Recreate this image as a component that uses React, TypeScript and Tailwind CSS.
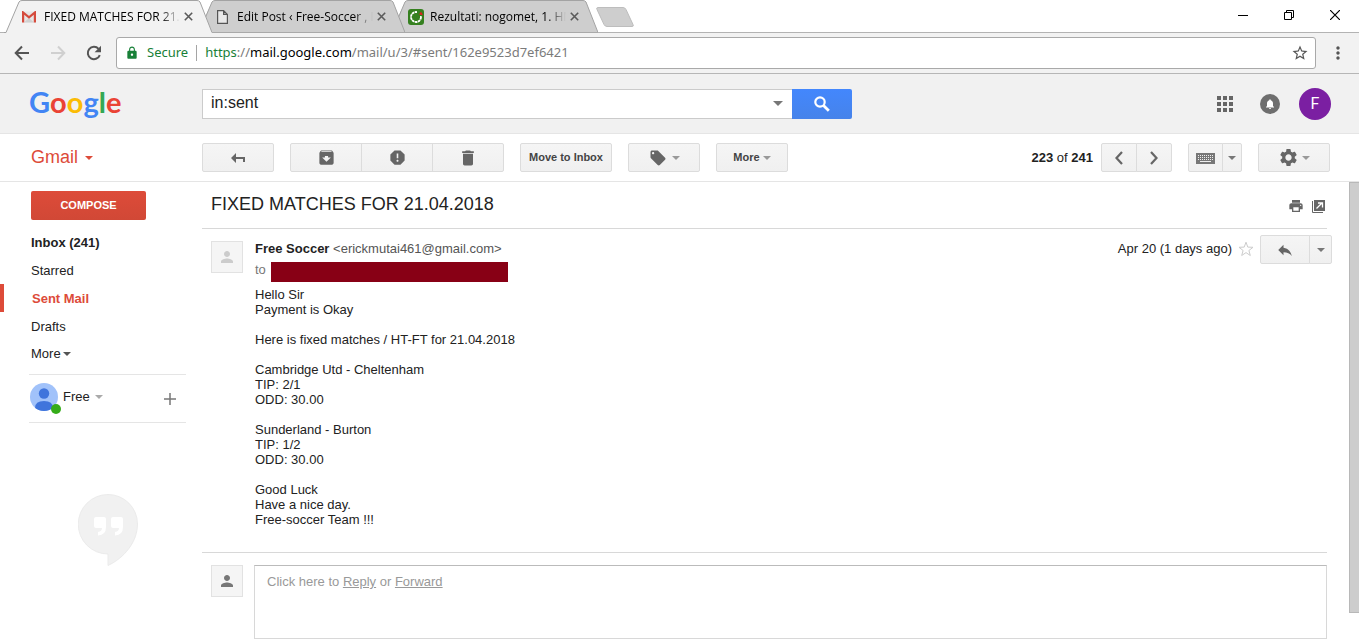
import React from "react";
import {
  MdApps,
  MdArchive,
  MdDelete,
  MdLocalOffer,
  MdLock,
  MdMoreVert,
  MdNotifications,
  MdPerson,
  MdPrint,
  MdReply,
  MdReport,
  MdSettings,
  MdStarBorder,
} from "react-icons/md";

function Caret({ className = "text-[#777]" }: { className?: string }) {
  return (
    <svg viewBox="0 0 8 4" className={`h-1 w-2 shrink-0 ${className}`} aria-hidden="true">
      <path d="M0 0h8L4 4z" fill="currentColor" />
    </svg>
  );
}

function CloseIcon() {
  return (
    <svg viewBox="0 0 9 9" className="size-[9px]" aria-hidden="true">
      <path d="M.8.8l7.4 7.4M8.2.8L.8 8.2" stroke="#5a5a5a" strokeWidth="1.6" />
    </svg>
  );
}

function GmailIcon() {
  return (
    <svg viewBox="0 0 14 12" className="h-3 w-[14px]" aria-hidden="true">
      <rect x="1" y=".5" width="12" height="11" fill="#e6e6e6" />
      <path d="M2 11.500L7 7l5 4.500z" fill="#d0d0d0" />
      <path d="M1.100 11.500V1.500L7 6.300l5.900-4.800v10" fill="none" stroke="#d54b3d" strokeWidth="2.200" />
    </svg>
  );
}

function PageIcon() {
  return (
    <svg viewBox="0 0 11 14" className="ml-[2px] h-[14px] w-[11px]" aria-hidden="true">
      <path d="M.6.6h6l3.800 3.800v9H.6zM6.600.6v3.800h3.800" fill="#e8e8e8" stroke="#555" strokeWidth="1.200" />
    </svg>
  );
}

function RezultatiIcon() {
  return (
    <svg viewBox="0 0 16 16" className="size-4" aria-hidden="true">
      <rect width="16" height="16" rx="3" fill="#35801f" />
      <circle cx="8" cy="8" r="5" fill="none" stroke="#fff" strokeWidth="1.800" strokeDasharray="2.600 .5" />
      <path d="M9 1.500h5.500V7H9z" fill="#35801f" />
      <path d="M11 5.500L13 2.500l2 3.800z" fill="#e02020" />
    </svg>
  );
}

type TabProps = { title: string; icon: React.ReactNode; active?: boolean; order: string };

function BrowserTab({ title, icon, active, order }: TabProps) {
  return (
    <div className={`relative -ml-[15px] flex h-[33px] w-52 items-center pr-[19px] pl-[18px] first:ml-0 ${order}`}>
      <svg viewBox="0 0 208 33" preserveAspectRatio="none" className="absolute inset-0 size-full" aria-hidden="true">
        <path
          d={active ? "M0 33V32.500h2L15 2Q16 .5 18 .5H193Q195 .5 196 2L208 32.500V33z" : "M1 32.500L15 2Q16 .5 18 .5H193Q195 .5 196 2L208 32.500z"}
          fill={active ? "#f2f2f2" : "#cecece"}
        />
        <path
          d="M0 32.500h2L15 2Q16 .5 18 .5H193Q195 .5 196 2L208 32.500"
          fill="none"
          stroke="#a3a3a3"
        />
        {!active && <path d="M0 32.500H208" stroke="#a9a9a9" />}
      </svg>
      <span className="relative flex w-[22px] shrink-0 items-center">{icon}</span>
      <span className="relative min-w-0 flex-1 overflow-hidden text-[12px] leading-4 whitespace-nowrap text-black [mask-image:linear-gradient(to_right,black_86%,transparent)]">
        {title}
      </span>
      <button aria-label={`Close ${title}`} className="relative ml-1">
        <CloseIcon />
      </button>
    </div>
  );
}

function BrowserChrome() {
  return (
    <div className="font-['Open_Sans','Noto_Sans',sans-serif]">
      <div className="flex h-[33px] bg-white shadow-[inset_0_-1px_0_#b3b3b3]">
        <div className="flex pl-1">
          <BrowserTab active order="z-30" icon={<GmailIcon />} title="FIXED MATCHES FOR 21.0" />
          <BrowserTab order="z-20" icon={<PageIcon />} title="Edit Post ‹ Free-Soccer , F" />
          <BrowserTab order="z-10" icon={<RezultatiIcon />} title="Rezultati: nogomet, 1. HN" />
        </div>
        <button aria-label="New tab" className="-ml-[3px] h-[22px] w-10 self-start pt-[7px]">
          <svg viewBox="0 0 40 22" className="h-[22px] w-10" aria-hidden="true">
            <path d="M3 .5h25q2 0 3 2l7 15q1 2-1 2H12q-2 0-3-2L2 2.500q-1-2 1-2z" fill="#cecece" stroke="#bdbdbd" />
          </svg>
        </button>
        <div className="ml-auto flex items-center gap-9 pr-[19px] pb-1">
          <button aria-label="Minimize">
            <svg viewBox="0 0 10 10" className="size-[10px]"><path d="M0 5.500h10" stroke="#000" /></svg>
          </button>
          <button aria-label="Restore">
            <svg viewBox="0 0 10 10" className="size-[10px]" fill="none" stroke="#000">
              <path d="M.5 2.500h7v7h-7zM2.500 2.500v-2h7v7h-2" />
            </svg>
          </button>
          <button aria-label="Close window">
            <svg viewBox="0 0 10 10" className="size-[10px]"><path d="M0 0l10 10M10 0L0 10" stroke="#000" strokeWidth="1.200" /></svg>
          </button>
        </div>
      </div>
      <div className="flex items-center border-b border-[#b6b6b6] bg-[#f2f2f2] py-1 pr-[11px] pl-[14px]">
        <div className="flex w-[102px] shrink-0 items-center gap-5">
          <button aria-label="Back">
            <svg viewBox="0 0 16 16" className="size-4" fill="none" stroke="#555" strokeWidth="2">
              <path d="M15 8H2M8 1.500L1.700 8 8 14.500" />
            </svg>
          </button>
          <button aria-label="Forward">
            <svg viewBox="0 0 16 16" className="size-4" fill="none" stroke="#d0d0d0" strokeWidth="2">
              <path d="M1 8h13M8 1.500L14.300 8 8 14.500" />
            </svg>
          </button>
          <button aria-label="Reload">
            <svg viewBox="0 0 16 16" className="size-4" aria-hidden="true">
              <path d="M13.800 10.200A6.200 6.200 0 1 1 12.600 3.800" fill="none" stroke="#555" strokeWidth="2" />
              <path d="M15 .8v6.400H8.600z" fill="#555" />
            </svg>
          </button>
        </div>
        <div className="flex h-8 min-w-0 flex-1 items-center rounded-[3px] border border-[#a9a9a9] bg-white pr-[6px] pl-2 font-['Noto_Sans','Open_Sans',sans-serif] text-[13px]">
          <MdLock className="size-[14px] shrink-0 text-[#188038]" />
          <span className="ml-2 text-[#188038]">Secure</span>
          <span className="mx-2 h-4 w-px bg-[#a5a5a5]" />
          <div className="min-w-0 flex-1 truncate text-[#7b7b7b]">
            <span className="text-[#188038]">https</span>://<span className="text-black">mail.google.com</span>/mail/u/3/#sent/162e9523d7ef6421
          </div>
          <button aria-label="Bookmark this page"><MdStarBorder className="size-[18px] text-[#555]" /></button>
        </div>
        <button aria-label="Browser menu" className="ml-3"><MdMoreVert className="size-5 text-[#555]" /></button>
      </div>
    </div>
  );
}

const toolButton =
  "flex h-[29px] items-center justify-center border border-[#dcdcdc] bg-linear-to-b from-[#f5f5f5] to-[#f0f0f0] text-[11px] font-bold text-[#444]";

function Header() {
  return (
    <header className="flex h-[60px] items-center border-b border-[#e5e5e5] bg-[#f1f1f1] pr-7 pl-[29px]">
      <a href="#google" aria-label="Google" className="flex w-[173px] shrink-0 items-center pb-1 font-['Lato',sans-serif] text-[29px] leading-[30px] font-bold">
        <span className="text-[#4285f4]">G</span>
        <span className="text-[#ea4335]">o</span>
        <span className="text-[#fbbc05]">o</span>
        <span className="text-[#4285f4]">g</span>
        <span className="text-[#34a853]">l</span>
        <span className="text-[#ea4335]">e</span>
      </a>
      <form className="flex h-[30px] w-[650px]" onSubmit={(e) => e.preventDefault()}>
        <div className="flex min-w-0 flex-1 items-center border border-r-0 border-[#cbcbcb] bg-white pr-[9px]">
          <input aria-label="Search mail" defaultValue="in:sent" className="h-full min-w-0 flex-1 px-2 pb-[2px] text-[16px] text-[#222] outline-none" />
          <button type="button" aria-label="Search options">
            <svg viewBox="0 0 10 5" className="h-[5px] w-[10px] text-[#777]"><path d="M0 0h10L5 5z" fill="currentColor" /></svg>
          </button>
        </div>
        <button aria-label="Search" className="flex w-[60px] items-center justify-center rounded-r-[2px] bg-linear-to-b from-[#4387fd] to-[#4683ea]">
          <svg viewBox="0 0 16 16" className="size-4" fill="none" stroke="#fff" aria-hidden="true">
            <circle cx="6" cy="6" r="4.700" strokeWidth="2.200" />
            <path d="M9.500 9.500l5.300 5.300" strokeWidth="2.800" />
          </svg>
        </button>
      </form>
      <div className="ml-auto flex items-center">
        <button aria-label="Apps"><MdApps className="size-6 text-[#666]" /></button>
        <button aria-label="Notifications" className="ml-[23px] flex size-5 items-center justify-center rounded-full bg-[#6e6e6e]">
          <MdNotifications className="size-3 text-white" />
        </button>
        <button aria-label="Account" className="ml-[19px] flex size-8 items-center justify-center rounded-full bg-[#7b1fa2] font-['Roboto',sans-serif] text-[16px] text-white">
          F
        </button>
      </div>
    </header>
  );
}

function Toolbar() {
  return (
    <div className="flex items-center border-b border-[#e5e5e5] py-[9px] pr-[29px] pl-[31px]">
      <button className="flex w-[171px] shrink-0 items-center gap-[7px] text-[18px] leading-[21px] text-[#dd4b39]">
        Gmail <Caret className="text-[#dd4b39]" />
      </button>
      <div className="flex gap-4">
        <button aria-label="Back to Sent Mail" className={`${toolButton} w-[72px] rounded-[2px]`}>
          <svg viewBox="0 0 14 10" className="h-[10px] w-[14px]"><path d="M0 5l5-5v4h9v5h-2V6H5v4z" fill="#666" /></svg>
        </button>
        <div className="flex">
          <button aria-label="Archive" className={`${toolButton} w-[72px] rounded-l-[2px]`}><MdArchive className="size-[19px] text-[#666]" /></button>
          <button aria-label="Report spam" className={`${toolButton} -ml-px w-[72px]`}><MdReport className="size-[19px] text-[#666]" /></button>
          <button aria-label="Delete" className={`${toolButton} -ml-px w-[72px] rounded-r-[2px]`}><MdDelete className="size-5 text-[#666]" /></button>
        </div>
        <button className={`${toolButton} w-[92px] rounded-[2px]`}>Move to Inbox</button>
        <button aria-label="Labels" className={`${toolButton} w-[72px] gap-[5px] rounded-[2px]`}>
          <MdLocalOffer className="size-[18px] text-[#666]" /><Caret className="text-[#999]" />
        </button>
        <button className={`${toolButton} w-[72px] gap-[3px] rounded-[2px]`}>More <Caret className="text-[#999]" /></button>
      </div>
      <div className="ml-auto flex items-center">
        <span className="mr-2 text-[13px] leading-5 text-[#222]"><b>223</b> of <b>241</b></span>
        <div className="flex">
          <button aria-label="Newer" className={`${toolButton} w-9 rounded-l-[2px]`}>
            <svg viewBox="0 0 8 14" className="h-[14px] w-2" fill="none" stroke="#666" strokeWidth="2.200"><path d="M7 1L1.500 7 7 13" /></svg>
          </button>
          <button aria-label="Older" className={`${toolButton} -ml-px w-9 rounded-r-[2px]`}>
            <svg viewBox="0 0 8 14" className="h-[14px] w-2" fill="none" stroke="#666" strokeWidth="2.200"><path d="M1 1l5.500 6L1 13" /></svg>
          </button>
        </div>
        <div className="ml-4 flex">
          <button aria-label="Input tools" className={`${toolButton} w-[35px] rounded-l-[2px] pt-[2px]`}>
            <svg viewBox="0 0 19 11" className="h-[11px] w-[19px]">
              <rect width="19" height="11" fill="#777" />
              <path d="M2 2.500h15M2 4.500h15M2 6.500h15" stroke="#eee" strokeDasharray="1 1" />
              <path d="M4 8.500h11" stroke="#eee" />
            </svg>
          </button>
          <button aria-label="Select input tool" className={`${toolButton} -ml-px w-5 rounded-r-[2px]`}><Caret /></button>
        </div>
        <button aria-label="Settings" className={`${toolButton} ml-4 w-[72px] gap-[3px] rounded-[2px]`}>
          <MdSettings className="size-[21px] text-[#666]" /><Caret className="text-[#999]" />
        </button>
      </div>
    </div>
  );
}

function Sidebar() {
  return (
    <aside className="w-[202px] shrink-0 pt-[9px] text-[13px] leading-[28px] text-[#222]">
      <button className="ml-[31px] block h-[29px] w-[115px] rounded-[2px] bg-linear-to-b from-[#dd4b39] to-[#d14836] pb-[2px] text-[11px] leading-[26px] font-bold text-white">
        COMPOSE
      </button>
      <nav className="mt-2 flex flex-col leading-[30px]">
        <a href="#inbox" className="h-7 pl-[31px] font-bold">Inbox (241)</a>
        <a href="#starred" className="h-7 pl-[31px]">Starred</a>
        <a href="#sent" className="h-7 border-l-4 border-[#dd4b39] pl-7 font-bold text-[#dd4b39]">Sent Mail</a>
        <a href="#drafts" className="h-7 pl-[31px]">Drafts</a>
        <button className="flex items-center gap-[2px] pl-[31px] leading-[27px]">More <Caret className="text-[#555]" /></button>
      </nav>
      <div className="mt-[7px] mr-4 ml-[29px] flex h-[49px] items-center border-y border-[#e5e5e5] pr-[10px] pl-px">
        <div className="relative mb-[3px]">
          <svg viewBox="0 0 28 28" className="size-7" aria-hidden="true">
            <defs><clipPath id="chatAvatar"><circle cx="14" cy="14" r="14" /></clipPath></defs>
            <g clipPath="url(#chatAvatar)">
              <rect width="28" height="28" fill="#a1c2fa" />
              <circle cx="14" cy="10.500" r="5.200" fill="#3f74dc" />
              <path d="M5 25q0-7 9-7t9 7v3H5z" fill="#3f74dc" />
            </g>
          </svg>
          <span className="absolute -right-[3px] -bottom-[3px] size-[10px] rounded-full bg-[#35ac19]" />
        </div>
        <button className="mb-[3px] ml-[5px] flex items-center gap-[5px]">Free <Caret className="text-[#aaa]" /></button>
        <button aria-label="New conversation" className="ml-auto">
          <svg viewBox="0 0 12 12" className="size-3"><path d="M6 0v12M0 6h12" stroke="#777" strokeWidth="1.500" /></svg>
        </button>
      </div>
      <svg viewBox="0 0 60 72" className="mt-[71px] ml-[78px] h-[72px] w-[60px]" aria-hidden="true">
        <path d="M30 .5a29.500 29.500 0 1 0 0 59.500v11.500C46 64 59.500 48 59.500 30A29.500 29.500 0 0 0 30 .5z" fill="#f1f1f1" stroke="#ebebeb" />
        <path d="M18 23h8q2 0 2 2v8q0 8-8 8.500v-3.500q4-.5 4-4h-6q-2 0-2-2v-7q0-2 2-2zM35 23h8q2 0 2 2v8q0 8-8 8.500v-3.500q4-.5 4-4h-6q-2 0-2-2v-7q0-2 2-2z" fill="#fff" />
      </svg>
    </aside>
  );
}

const body = [
  ["Hello Sir", "Payment is Okay"],
  ["Here is fixed matches / HT-FT for 21.04.2018"],
  ["Cambridge Utd - Cheltenham", "TIP: 2/1", "ODD: 30.00"],
  ["Sunderland - Burton", "TIP: 1/2", "ODD: 30.00"],
  ["Good Luck", "Have a nice day.", "Free-soccer Team !!!"],
];

function Avatar({ className }: { className: string }) {
  return (
    <div className="flex size-8 shrink-0 items-center justify-center border border-[#e2e2e2] bg-[#f5f5f5]">
      <MdPerson className={`size-[18px] ${className}`} />
    </div>
  );
}

function Message() {
  return (
    <main className="min-w-0 flex-1 pr-[22px] text-[13px] leading-[15px] text-[#222]">
      <div className="flex h-[47px] items-center border-b border-[#d8d8d8] pr-[2px] pl-[9px]">
        <h1 className="pb-[2px] text-[18px] leading-6">FIXED MATCHES FOR 21.04.2018</h1>
        <div className="ml-auto flex items-center gap-2 pt-[2px]">
          <button aria-label="Print"><MdPrint className="size-4 text-[#666]" /></button>
          <button aria-label="In new window">
            <svg viewBox="0 0 13 13" className="size-[13px]">
              <path d="M2 0h11v11H2z" fill="#666" />
              <path d="M.5 1v11.500H11" fill="none" stroke="#666" />
              <path d="M4.500 8.500l5-5M6 3h4.500v4.500" fill="none" stroke="#fff" strokeWidth="1.300" />
            </svg>
          </button>
        </div>
      </div>
      <article className="-mr-[5px] flex gap-3 pt-[6px] pb-[25px] pl-[9px]">
        <div className="pt-[6px]"><Avatar className="text-[#ccc]" /></div>
        <div className="min-w-0 flex-1">
          <div className="flex h-[27px] items-center">
            <span><b>Free Soccer</b> <span className="text-[#555]">&lt;erickmutai461@gmail.com&gt;</span></span>
            <span className="ml-auto">Apr 20 (1 days ago)</span>
            <button aria-label="Star" className="mx-[6px]">
              <svg viewBox="0 0 16 16" className="size-4">
                <path d="M8 1.200l1.800 4.900 5.200.2-4.100 3.200 1.400 5L8 11.600l-4.300 2.900 1.400-5L1 6.300l5.200-.2z" fill="#fff" stroke="#ccc" />
              </svg>
            </button>
            <div className="flex self-start">
              <button aria-label="Reply" className={`${toolButton} w-[50px] rounded-l-[2px]`}><MdReply className="size-[18px] text-[#666]" /></button>
              <button aria-label="More reply options" className={`${toolButton} -ml-px w-[23px] rounded-r-[2px]`}><Caret /></button>
            </div>
          </div>
          <div className="flex h-5 items-center text-[#777]">
            <span className="w-4 pb-[6px]">to</span>
            <span className="h-5 w-[237px] bg-[#880015]" />
          </div>
          <div className="mt-[5px] space-y-[15px]">
            {body.map((lines) => (
              <div key={lines.join()}>
                {lines.map((line) => <p key={line}>{line}</p>)}
              </div>
            ))}
          </div>
        </div>
      </article>
      <section className="flex gap-[11px] border-t border-[#d8d8d8] pt-3 pl-[9px]">
        <Avatar className="text-[#777]" />
        <div className="h-[74px] flex-1 border border-[#d8d8d8] border-t-[#bbb] px-3 pt-2 text-[#999]">
          Click here to <a href="#reply" className="underline">Reply</a> or <a href="#forward" className="underline">Forward</a>
        </div>
      </section>
    </main>
  );
}

export default function App() {
  return (
    <div className="flex min-h-screen flex-col bg-white font-['Liberation_Sans',Arial,sans-serif]">
      <BrowserChrome />
      <Header />
      <Toolbar />
      <div className="flex flex-1">
        <Sidebar />
        <Message />
        <div className="mb-7 w-[10px] border border-r-0 border-[#b8b8b8] bg-[#cdcdcd]" />
      </div>
    </div>
  );
}
